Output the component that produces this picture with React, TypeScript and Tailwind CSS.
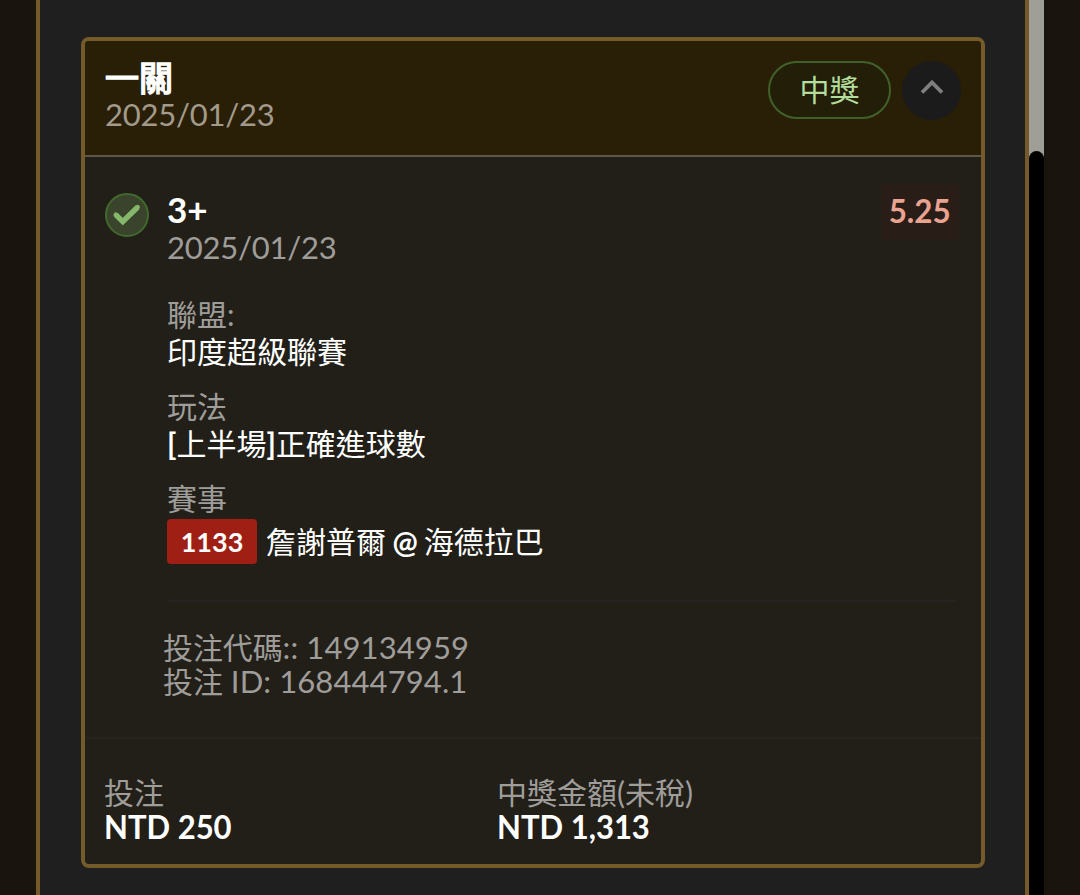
import type { ReactNode } from 'react'

const bet = {
  title: '一關',
  date: '2025/01/23',
  status: '中獎',
  pick: '3+',
  odds: '5.25',
  code: '149134959',
  id: '168444794.1',
}

const totals = [
  { label: '投注', value: 'NTD 250' },
  { label: '中獎金額(未稅)', value: 'NTD 1,313' },
]

// Label on top, value underneath
function Detail({ label, children }: { label: string; children: ReactNode }) {
  return (
    <div>
      <p className="h-[37px] text-[30px] leading-[37px] text-[#9f9d99]">{label}</p>
      <div className="text-[30px] leading-[37px] text-white">{children}</div>
    </div>
  )
}

function CheckBadge() {
  return (
    <svg width="44" height="44" viewBox="0 0 44 44" fill="none" className="mt-9 shrink-0">
      <circle cx="22" cy="22" r="21" fill="#3a432c" stroke="#3f6b2c" strokeWidth="2" />
      <path d="M10.8 21.8 17.8 28.6 32.6 14.2" stroke="#84b76b" strokeWidth="5.4" strokeLinejoin="miter" />
      <path d="M10.8 21.8 17.8 28.6 32.6 14.2" stroke="#84b76b" strokeWidth="4.6" strokeLinecap="round" />
    </svg>
  )
}

function BetHeader() {
  return (
    <div className="flex h-[116px] justify-between border-b-2 border-[#5e5644] bg-[#291e06] px-5 pt-[19px]">
      <div>
        <h2 className="h-9 text-[34px] leading-9 font-normal text-white [-webkit-text-stroke:1.6px_white]">
          {bet.title}
        </h2>
        <p className="text-[31px] leading-9 tracking-[-0.25px] text-[#a29a8b]">{bet.date}</p>
      </div>
      <div className="mt-px flex gap-[11px]">
        <span className="flex h-[58px] w-[123px] items-center justify-center rounded-full border-2 border-[#40622a] bg-[#231e07] pb-0.5 text-[30px] leading-none text-[#b2dd9b]">
          {bet.status}
        </span>
        <button className="flex size-[59px] items-center justify-center rounded-full bg-[#1b1b1b]">
          <svg width="24" height="24" viewBox="0 0 24 24" fill="none" className="mb-2">
            <path d="M2 17.5 12 7.5 22 17.5" stroke="#7f7f7f" strokeWidth="3.8" />
          </svg>
        </button>
      </div>
    </div>
  )
}

export default function App() {
  return (
    <div className="flex h-[895px] w-[1080px] overflow-hidden bg-[#19150e] font-['Lato','Noto_Sans_CJK_TC',sans-serif]">
      <main className="ml-9 w-[993px] border-x-4 border-[#755b2a] bg-[#1f1f1f] pt-[37px] pl-[41px]">
        <section className="h-[831px] w-[904px] overflow-hidden rounded-lg border-4 border-[#755b2a] bg-[#221f19]">
          <BetHeader />

          <div className="flex h-[580px] gap-[18px] pl-5">
            <CheckBadge />
            <div className="w-[788px] pt-[33px]">
              <div className="flex h-[74px] justify-between">
                <div>
                  <h3 className="h-[38px] text-[35px] leading-[38px] font-bold text-white">{bet.pick}</h3>
                  <p className="text-[31px] leading-[38px] tracking-[-0.25px] text-[#9f9d99]">{bet.date}</p>
                </div>
                <span className="-mt-[6px] -mr-1 flex h-[56px] w-[78px] items-center justify-center bg-[#291d18] pb-0.5 text-[33px] font-bold text-[#eba391]">
                  <span className="scale-x-[0.95]">{bet.odds}</span>
                </span>
              </div>

              <div className="mt-8 flex flex-col gap-[18px]">
                <Detail label="聯盟:">印度超級聯賽</Detail>
                <Detail label="玩法">
                  <b className="font-bold">[</b>上半場<b className="font-bold">]</b>正確進球數
                </Detail>
                <Detail label="賽事">
                  <div className="flex items-center gap-[9px] pt-0.5">
                    <span className="flex h-[45px] w-[90px] items-center justify-center rounded-[4px] bg-[#9f1f15] text-[27px] font-bold">
                      1133
                    </span>
                    <span>
                      詹謝普爾<b className="font-bold tracking-[-0.7px]"> @ </b>海德拉巴
                    </span>
                  </div>
                </Detail>
              </div>

              <div className="mt-9 border-t-2 border-[#262320]" />
              <div className="-ml-1 pt-7 text-[31px] leading-[34px] tracking-[0.1px] text-[#9f9d99]">
                <p><span className="text-[30px] tracking-[-0.1px]">投注代碼</span>:: {bet.code}</p>
                <p><span className="text-[30px] tracking-[-0.1px]">投注</span> ID: {bet.id}</p>
              </div>
            </div>
          </div>

          <div className="flex border-t-2 border-[#262320] pt-9 pl-[19px]">
            {totals.map((total) => (
              <div key={total.label} className="w-[393px] shrink-0">
                <p className="h-[34px] text-[30px] leading-[34px] text-[#9f9d99]">{total.label}</p>
                <p className="origin-left scale-x-[0.94] text-[33px] leading-[34px] font-bold text-white">{total.value}</p>
              </div>
            ))}
          </div>
        </section>
      </main>

      {/* Scrollbar */}
      <div className="w-[15px] bg-[#9f9e97] pt-[151px]">
        <div className="h-[744px] rounded-t-full bg-black" />
      </div>
    </div>
  )
}
